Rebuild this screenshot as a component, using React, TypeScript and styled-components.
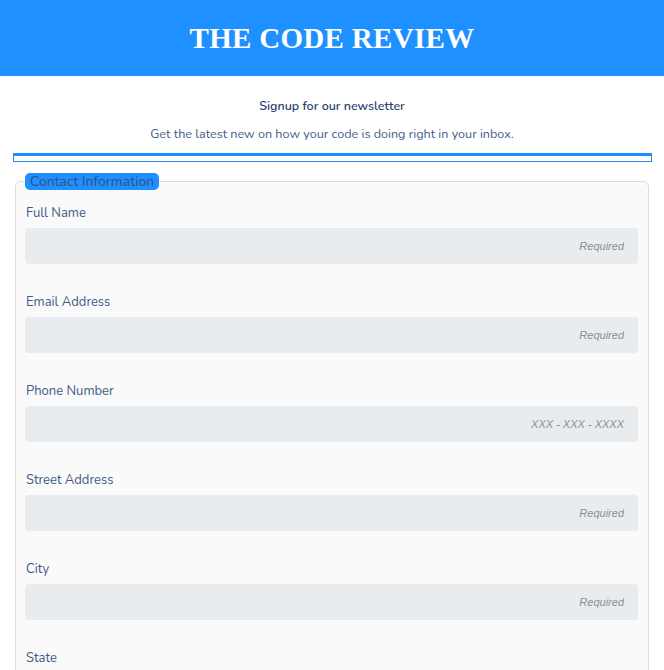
import React from "react";
import styled, { createGlobalStyle } from "styled-components";

const Global = createGlobalStyle`
  html, body { margin: 0; padding: 0; background: #ffffff; }
  body { font-family: "Nunito", "Lato", "Noto Sans", sans-serif; }
  * { box-sizing: border-box; }
`;

const Header = styled.header`
  height: 76px;
  background: #1e90ff;
  display: flex;
  align-items: center;
  justify-content: center;
`;

const Title = styled.h1`
  margin: 0;
  padding-top: 1px;
  font-family: "Liberation Serif", "Times New Roman", serif;
  font-weight: 700;
  font-size: 29px;
  color: #ffffff;
  letter-spacing: 0.3px;
`;

const Intro = styled.section`
  display: flex;
  flex-direction: column;
  align-items: center;
  padding-top: 21px;
`;

const Heading = styled.h2`
  margin: 0;
  font-size: 12.5px;
  font-weight: 600;
  color: #2b4270;
`;

const Sub = styled.p`
  margin: 11px 0 0;
  font-size: 12.6px;
  color: #46608a;
`;

const Rule = styled.div`
  margin: 11px 12px 0 13px;
  height: 9px;
  border: 1px solid #2f86e0;
  border-top: 3px solid #1e90ff;
`;

const Fieldset = styled.fieldset`
  margin: 11px 15px 0 15px;
  padding: 15px 10px 20px 9px;
  border: 1px solid #dcdcdc;
  border-radius: 6px;
  background: #fafafa;
  display: flex;
  flex-direction: column;
`;

const Legend = styled.legend`
  background: #1e90ff;
  color: #34507e;
  font-size: 14px;
  padding: 0 5px;
  margin-left: 0;
  border-radius: 5px;
  line-height: 17px;
`;

const Field = styled.div`
  display: flex;
  flex-direction: column;
  gap: 7px;
  margin-bottom: 30px;
`;

const Label = styled.label`
  font-size: 13px;
  color: #3f5a86;
  padding-left: 1px;
  line-height: 16px;
`;

const Input = styled.input`
  height: 36px;
  border: none;
  border-radius: 4px;
  background: #e8ecee;
  padding: 0 14px;
  text-align: right;
  font-family: "Liberation Sans", Arial, sans-serif;
  font-size: 11px;
  outline: none;
  &::placeholder {
    color: #8a8f94;
    font-style: italic;
  }
`;

const fields = [
  { label: "Full Name", ph: "Required" },
  { label: "Email Address", ph: "Required" },
  { label: "Phone Number", ph: "XXX - XXX - XXXX" },
  { label: "Street Address", ph: "Required" },
  { label: "City", ph: "Required" },
  { label: "State", ph: "Required" },
];

export default function App() {
  return (
    <>
      <Global />
      <Header>
        <Title>THE CODE REVIEW</Title>
      </Header>
      <Intro>
        <Heading>Signup for our newsletter</Heading>
        <Sub>Get the latest new on how your code is doing right in your inbox.</Sub>
      </Intro>
      <Rule />
      <Fieldset>
        <Legend>Contact Information</Legend>
        {fields.map((f) => (
          <Field key={f.label}>
            <Label>{f.label}</Label>
            <Input placeholder={f.ph} />
          </Field>
        ))}
      </Fieldset>
    </>
  );
}
